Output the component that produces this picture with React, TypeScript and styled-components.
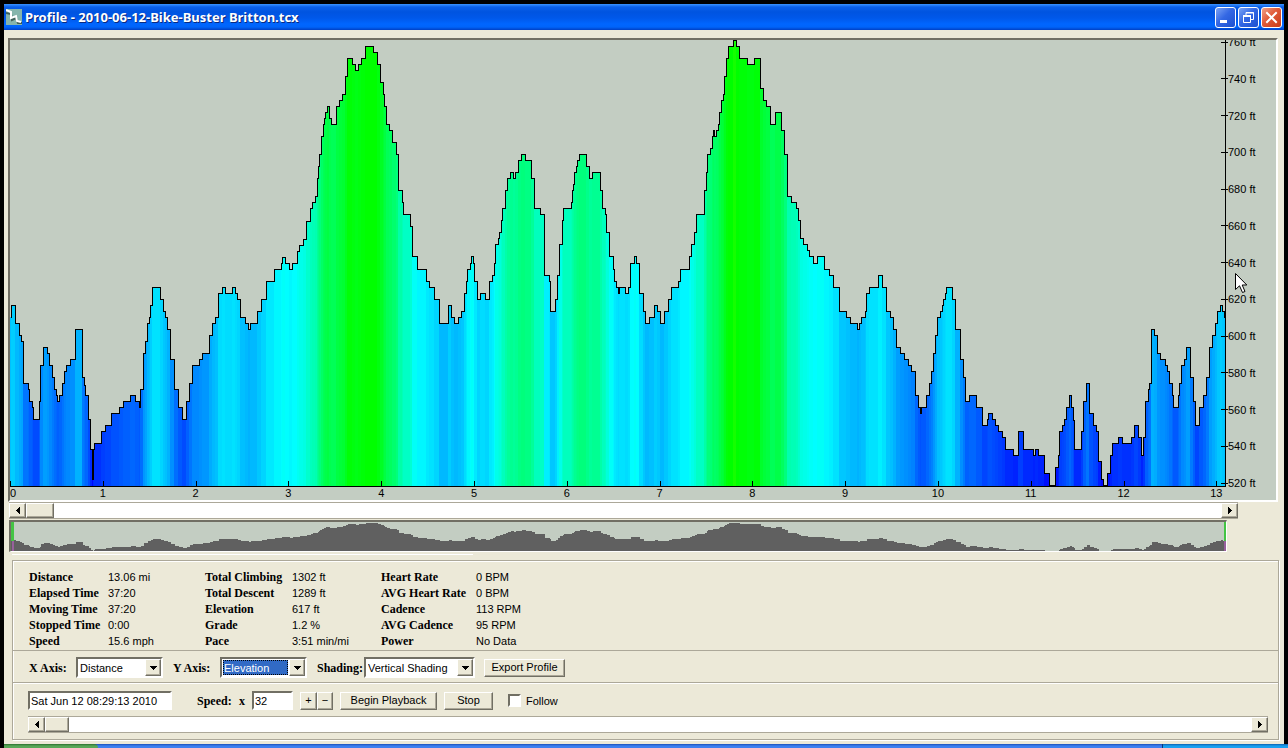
import React, { useState } from 'react';
import styled, { createGlobalStyle, css } from 'styled-components';

const face = '#ece9d8';
const shadow = '#aca899';
const dark = '#716f64';
const plotBg = '#c3cdc2';

const sans = '"Liberation Sans", Arial, sans-serif';
const serif = '"Liberation Serif", "Times New Roman", serif';

const Global = createGlobalStyle`
  * { box-sizing: border-box; }
  body { margin: 0; background: #000; font: 11px/14px ${sans}; color: #000; }
  button, input, select { font: inherit; color: inherit; margin: 0; }
`;

const raised = css`
  border: 1px solid;
  border-color: #fff ${dark} ${dark} #fff;
  box-shadow: inset -1px -1px ${shadow};
  background: ${face};
`;

const sunken = css`
  border: 2px solid;
  border-color: ${dark} #fff #fff ${dark};
  background: #fff;
`;

const Screen = styled.div`
  min-height: 100vh;
  display: flex;
  flex-direction: column;
  padding: 4px 4px 0;
  background: #000;
`;

const TitleBar = styled.header`
  display: flex;
  align-items: center;
  gap: 2px;
  height: 26px;
  padding: 0 2px;
  background: linear-gradient(#3a93ff 0, #0a5fe8 3px, #0054e0 8px, #0058ea 14px, #0066ff 20px, #0064fa 23px, #0040c4 26px);
`;

const Title = styled.h1`
  flex: 1;
  margin: 0;
  padding-left: 1px;
  font: bold 13px/18px "Noto Sans", "Open Sans", sans-serif;
  color: #fff;
  text-shadow: 1px 1px #0a2a80;
  white-space: nowrap;
`;

const CaptionButton = styled.button<{ $close?: boolean }>`
  width: 21px;
  height: 21px;
  padding: 0;
  display: flex;
  border: 1px solid #fff;
  border-radius: 3px;
  background: ${(p) =>
    p.$close
      ? 'linear-gradient(135deg, #f0a088, #e05a38 45%, #c83c18)'
      : 'linear-gradient(135deg, #7ca4f4, #3468e4 45%, #1c50d0)'};
`;

const Body = styled.main`
  flex: 1;
  display: flex;
  flex-direction: column;
  background: ${face};
`;

const Chart = styled.section`
  position: relative;
  flex: 1 0 300px;
  display: flex;
  margin: 8px 6px 0 4px;
  overflow: hidden;
  border: 2px solid;
  border-color: ${dark} #fff #fff ${dark};
  background: ${plotBg};
`;

const PlotColumn = styled.div`
  flex: 1;
  min-width: 0;
  display: flex;
  flex-direction: column;
`;

const Plot = styled.div`
  flex: 1 1 0;
  min-height: 0;
  border-right: 1px solid #000;
  border-bottom: 1px solid #000;
`;

const Stretch = styled.svg`
  display: block;
  width: 100%;
  height: 100%;
`;

const XAxis = styled.div`
  display: flex;
  height: 13px;
`;

const XCell = styled.div<{ $last: boolean }>`
  flex: ${(p) => (p.$last ? 0.104 : 1)} 0 0;
  width: 0;
`;

const XLabel = styled.span<{ $first: boolean }>`
  display: block;
  width: 24px;
  margin-left: ${(p) => (p.$first ? 0 : -12)}px;
  text-align: ${(p) => (p.$first ? 'left' : 'center')};
  line-height: 12px;
`;

const YAxis = styled.div`
  display: flex;
  flex-direction: column;
  justify-content: space-between;
  width: 55px;
  margin: -5px 0 10px -5px;
`;

const YLabel = styled.div`
  display: flex;
  align-items: center;
  line-height: 14px;
  white-space: nowrap;
  &::before {
    content: '';
    width: 7px;
    height: 1px;
    background: #000;
  }
`;

const Pointer = styled.svg`
  position: absolute;
  right: 28px;
  top: 233px;
`;

const Scroll = styled.div`
  display: flex;
  height: 17px;
  border-top: 1px solid ${shadow};
  border-bottom: 1px solid ${shadow};
  background: #fff;
`;

const ProfileScroll = styled(Scroll)`
  margin: 0 46px 0 5px;
`;

const PlaybackScroll = styled(Scroll)`
  margin-top: 6px;
`;

const ScrollButton = styled.button`
  ${raised}
  flex: none;
  width: 17px;
  padding: 0;
  display: flex;
  align-items: center;
  justify-content: center;
`;

const Range = styled.input<{ $thumb: number }>`
  appearance: none;
  flex: 1;
  min-width: 0;
  height: 15px;
  background: #fff;
  &::-webkit-slider-thumb {
    appearance: none;
    ${raised}
    width: ${(p) => p.$thumb}px;
    height: 15px;
    border-radius: 0;
  }
`;

const Overview = styled.section`
  height: 32px;
  margin: 1px 57px 0 5px;
  border: 2px solid;
  border-color: ${dark} #fff #fff ${dark};
  border-bottom-width: 1px;
  border-right-width: 1px;
  background: ${plotBg};
`;

const Highlight = styled.div`
  width: 36%;
  height: 1px;
  margin: 2px 0 5px 8px;
  background: #fff;
`;

const Panel = styled.section`
  margin: 0 5px 4px 8px;
  border: 1px solid ${shadow};
  box-shadow: 1px 1px #fff, inset 1px 1px #fff;
`;

const Stats = styled.div`
  display: flex;
  padding: 8px 16px 1px;
`;

const StatList = styled.dl<{ $label: number }>`
  display: grid;
  grid-template-columns: ${(p) => p.$label}px 1fr;
  grid-auto-rows: 16px;
  width: 176px;
  margin: 0;
  line-height: 16px;
  white-space: nowrap;
`;

const Term = styled.dt`
  font: bold 12px/16px ${serif};
`;

const Value = styled.dd`
  margin: 0;
`;

const Controls = styled.div`
  display: flex;
  align-items: center;
  height: 32px;
  padding: 2px 15px 0;
  border-top: 1px solid ${shadow};
`;

const Playback = styled.div`
  padding: 8px 10px 6px 15px;
  border-top: 1px solid ${shadow};
  box-shadow: inset 0 1px #fff;
`;

const PlaybackRow = styled.div`
  display: flex;
  align-items: center;
  height: 19px;
`;

const Label = styled.label<{ $width: number }>`
  width: ${(p) => p.$width}px;
  padding-left: 1px;
  font: bold 12px/16px ${serif};
  white-space: nowrap;
`;

const SelectBox = styled.div<{ $width: number; $active?: boolean }>`
  ${sunken}
  position: relative;
  width: ${(p) => p.$width}px;
  height: 21px;
  margin-right: 9px;
  select {
    appearance: none;
    display: block;
    width: 100%;
    height: 17px;
    padding: 2px 18px 0 2px;
    border: 0;
    border-radius: 0;
    outline: 0;
    line-height: 15px;
    color: ${(p) => (p.$active ? '#fff' : '#000')};
    background: ${(p) =>
      p.$active ? 'linear-gradient(#316ac5, #316ac5) 1px 1px / calc(100% - 18px) 15px no-repeat' : '#fff'};
  }
  &::after {
    content: '';
    position: absolute;
    inset: 1px 17px 1px 1px;
    border: ${(p) => (p.$active ? '1px dotted #000' : '0')};
    pointer-events: none;
  }
`;

const DropArrow = styled.span`
  ${raised}
  position: absolute;
  top: 0;
  right: 0;
  width: 16px;
  height: 17px;
  display: flex;
  align-items: center;
  justify-content: center;
  pointer-events: none;
`;

const PushButton = styled.button<{ $width: number; $gap?: number }>`
  ${raised}
  width: ${(p) => p.$width}px;
  height: 18px;
  margin-left: ${(p) => p.$gap ?? 0}px;
  padding: 0 0 1px;
  line-height: 14px;
  white-space: nowrap;
`;

const TextBox = styled.input<{ $width: number; $gap?: number }>`
  ${sunken}
  width: ${(p) => p.$width}px;
  height: 19px;
  margin-right: ${(p) => p.$gap ?? 0}px;
  padding: 0 1px;
  line-height: 15px;
  outline: 0;
`;

const Check = styled.input`
  ${sunken}
  appearance: none;
  width: 13px;
  height: 13px;
  margin: 0 5px 0 15px;
  &:checked { background: ${dark}; background-clip: content-box; padding: 2px; }
`;

const Taskbar = styled.footer`
  display: flex;
  height: 4px;
  margin: 0 -4px 0 0;
  background: linear-gradient(#1c50b8, #3c80f0 2px);
`;

const StartEdge = styled.div`
  width: 94px;
  border-radius: 0 4px 0 0;
  background: linear-gradient(#2c7030, #58a858 2px);
`;

const TrayEdge = styled.div`
  width: 126px;
  margin-left: auto;
  border-left: 1px solid #083878;
  background: linear-gradient(#0c60b0, #18a0f0 2px);
`;

/* Each pair is the column where a level begins and the row of that level. */
const steps: number[] = [
  10, 317, 11, 305, 15, 323, 19, 335, 21, 341, 23, 383, 28, 389, 29, 401, 32, 407, 33, 419, 39, 401, 40, 365, 43, 347,
  47, 353, 49, 365, 52, 377, 54, 389, 56, 395, 57, 401, 59, 395, 62, 383, 64, 371, 66, 365, 70, 359, 75, 329, 82, 377,
  84, 385, 85, 395, 88, 419, 90, 449, 92, 479, 93, 449, 94, 443, 101, 431, 105, 425, 111, 413, 119, 407, 123, 401,
  130, 395, 135, 401, 139, 407, 140, 389, 143, 353, 145, 341, 147, 323, 149, 317, 150, 305, 152, 287, 160, 299,
  163, 311, 165, 317, 167, 329, 170, 359, 174, 389, 178, 407, 182, 419, 186, 401, 189, 383, 192, 365, 199, 359,
  202, 353, 209, 335, 212, 323, 215, 317, 218, 293, 222, 287, 225, 293, 232, 287, 235, 293, 237, 299, 240, 317,
  245, 323, 248, 329, 250, 323, 257, 311, 261, 299, 266, 281, 274, 269, 281, 263, 282, 257, 285, 263, 289, 269,
  292, 263, 297, 251, 299, 245, 303, 239, 306, 221, 310, 208, 312, 202, 315, 196, 317, 178, 318, 166, 319, 154,
  321, 136, 323, 124, 324, 118, 325, 112, 327, 106, 329, 118, 331, 124, 336, 106, 339, 100, 342, 94, 345, 76, 347, 58,
  352, 64, 355, 70, 358, 64, 361, 58, 365, 46, 373, 52, 377, 64, 380, 82, 383, 94, 384, 106, 386, 124, 389, 130,
  392, 142, 396, 154, 398, 190, 402, 202, 403, 214, 410, 226, 412, 256, 417, 269, 426, 281, 429, 287, 434, 299,
  439, 323, 448, 305, 451, 317, 454, 323, 458, 317, 461, 311, 464, 293, 466, 281, 467, 269, 470, 263, 471, 256,
  473, 263, 474, 281, 477, 299, 480, 293, 485, 299, 489, 281, 492, 275, 494, 263, 495, 244, 498, 238, 499, 232,
  501, 220, 502, 208, 505, 190, 507, 178, 510, 172, 513, 178, 515, 172, 518, 160, 521, 154, 525, 160, 531, 178,
  534, 208, 540, 214, 544, 275, 549, 281, 550, 311, 555, 299, 557, 275, 559, 244, 562, 220, 563, 208, 571, 202,
  572, 190, 573, 184, 574, 172, 576, 166, 577, 160, 579, 154, 586, 166, 589, 178, 592, 172, 600, 190, 602, 208,
  605, 214, 606, 232, 609, 256, 613, 269, 614, 281, 616, 287, 618, 293, 619, 287, 625, 293, 628, 287, 630, 263,
  634, 256, 636, 263, 639, 293, 643, 311, 645, 323, 649, 317, 654, 305, 657, 311, 660, 323, 664, 311, 668, 299,
  671, 287, 678, 281, 680, 269, 689, 256, 691, 244, 694, 232, 696, 214, 704, 190, 706, 172, 707, 154, 710, 148,
  712, 136, 713, 130, 714, 136, 716, 130, 718, 124, 719, 112, 721, 100, 723, 94, 724, 76, 726, 58, 728, 46, 733, 40,
  736, 46, 739, 58, 747, 64, 754, 58, 760, 88, 763, 100, 766, 106, 770, 124, 775, 112, 781, 130, 784, 154, 787, 196,
  791, 202, 796, 208, 798, 220, 800, 238, 803, 244, 807, 250, 809, 256, 813, 263, 817, 256, 824, 269, 829, 275,
  833, 287, 839, 311, 846, 317, 850, 323, 857, 329, 859, 323, 861, 317, 865, 311, 866, 293, 869, 287, 878, 275,
  882, 287, 886, 311, 890, 317, 893, 329, 896, 347, 900, 353, 904, 359, 908, 365, 911, 371, 915, 395, 918, 407,
  920, 413, 921, 407, 926, 395, 929, 383, 931, 371, 933, 353, 935, 335, 937, 317, 940, 311, 942, 305, 943, 299,
  945, 293, 946, 287, 952, 299, 955, 329, 960, 359, 963, 377, 965, 401, 969, 395, 976, 407, 982, 425, 987, 419,
  988, 413, 992, 419, 995, 425, 998, 431, 1002, 437, 1005, 449, 1013, 455, 1018, 431, 1023, 449, 1033, 455, 1035, 449,
  1038, 455, 1044, 473, 1049, 485, 1055, 467, 1058, 455, 1059, 431, 1062, 425, 1064, 419, 1066, 407, 1069, 395,
  1071, 407, 1073, 420, 1074, 449, 1081, 431, 1083, 401, 1086, 383, 1089, 413, 1093, 425, 1096, 431, 1098, 461,
  1101, 479, 1103, 485, 1107, 473, 1110, 455, 1112, 443, 1118, 437, 1122, 443, 1131, 437, 1134, 425, 1138, 437,
  1141, 455, 1143, 437, 1145, 401, 1148, 389, 1149, 383, 1151, 329, 1154, 335, 1157, 353, 1160, 359, 1165, 365,
  1167, 371, 1169, 383, 1172, 395, 1173, 407, 1178, 395, 1179, 383, 1181, 365, 1184, 359, 1186, 347, 1190, 377,
  1193, 401, 1195, 425, 1199, 407, 1203, 395, 1206, 377, 1209, 347, 1212, 335, 1215, 323, 1217, 311, 1220, 305,
  1222, 311, 1224, 317,
];

const X0 = 10;
const Y0 = 40;
const X1 = 1225;
const BASE = 446;
const W = X1 - X0;

const levels = Array.from({ length: steps.length / 2 }, (_, i) => ({
  x: steps[i * 2] - X0,
  end: (steps[i * 2 + 2] ?? X1) - X0,
  y: steps[i * 2 + 1] - Y0,
}));

const shade = (y: number) => {
  if (y >= 222) return `rgb(0,${Math.max(0, Math.round(((445 - y) / 223) * 255))},255)`;
  if (y >= 6) return `rgb(0,255,${Math.max(0, Math.round(((y - 12) / 210) * 255))})`;
  return 'rgb(20,255,0)';
};

const outline = levels
  .map((l, i) => `${i === 0 ? 'M' : 'L'}${l.x + 0.5} ${l.y + 0.5}H${l.end + 0.5}`)
  .join('')
  .replace(/L([\d.]+) ([\d.]+)/g, 'V$2');

const overviewY = (y: number) => Math.round(1 + (y - 6) * 0.0667);
const overview = `M0 29${levels.map((l) => `V${overviewY(l.y)}H${l.end}`).join('')}V29Z`;

const miles = Array.from({ length: 14 }, (_, i) => i);
const feet = Array.from({ length: 13 }, (_, i) => 760 - i * 20);

const Triangle = ({ d, w = 4, h = 7 }: { d: string; w?: number; h?: number }) => (
  <svg width={w} height={h} viewBox={`0 0 ${w} ${h}`} shapeRendering="crispEdges" aria-hidden="true">
    <path d={d} />
  </svg>
);

function ScrollParts({ label, thumb }: { label: string; thumb: number }) {
  const [value, setValue] = useState(0);
  return (
    <>
      <ScrollButton aria-label={`${label} back`} onClick={() => setValue(Math.max(0, value - 1))}>
        <Triangle d="M4 0V7L0 4V3Z" />
      </ScrollButton>
      <Range
        type="range"
        aria-label={label}
        $thumb={thumb}
        value={value}
        onChange={(e) => setValue(Number(e.target.value))}
      />
      <ScrollButton aria-label={`${label} forward`} onClick={() => setValue(Math.min(100, value + 1))}>
        <Triangle d="M0 0V7L4 4V3Z" />
      </ScrollButton>
    </>
  );
}

type PickerProps = { id: string; width: number; options: string[]; initial: string; active?: boolean };

function Picker({ id, width, options, initial, active }: PickerProps) {
  return (
    <SelectBox $width={width} $active={active}>
      <select id={id} defaultValue={initial}>
        {options.map((o) => (
          <option key={o}>{o}</option>
        ))}
      </select>
      <DropArrow>
        <Triangle d="M0 0H7L4 4H3Z" w={7} h={4} />
      </DropArrow>
    </SelectBox>
  );
}

const stats: { label: number; rows: [string, string][] }[] = [
  {
    label: 79,
    rows: [
      ['Distance', '13.06 mi'],
      ['Elapsed Time', '37:20'],
      ['Moving Time', '37:20'],
      ['Stopped Time', '0:00'],
      ['Speed', '15.6 mph'],
    ],
  },
  {
    label: 87,
    rows: [
      ['Total Climbing', '1302 ft'],
      ['Total Descent', '1289 ft'],
      ['Elevation', '617 ft'],
      ['Grade', '1.2 %'],
      ['Pace', '3:51 min/mi'],
    ],
  },
  {
    label: 95,
    rows: [
      ['Heart Rate', '0 BPM'],
      ['AVG Heart Rate', '0 BPM'],
      ['Cadence', '113 RPM'],
      ['AVG Cadence', '95 RPM'],
      ['Power', 'No Data'],
    ],
  },
];

export default function App() {
  const [speed, setSpeed] = useState(32);
  return (
    <Screen>
      <Global />
      <TitleBar>
        <svg width="16" height="16" viewBox="0 0 16 16" aria-hidden="true">
          <rect width="16" height="16" fill="#86b5ac" />
          <path d="M0 4L5 5L6 11L10 9L12 14H16" fill="none" stroke="#3f5f58" strokeWidth="2" />
          <path d="M0 1L5 3L5 9L10 7L11 12L15 13" fill="none" stroke="#fff" strokeWidth="2" />
        </svg>
        <Title>Profile - 2010-06-12-Bike-Buster Britton.tcx</Title>
        <CaptionButton aria-label="Minimize">
          <svg width="19" height="19" viewBox="0 0 19 19">
            <path d="M4 12H11V15H4Z" fill="#fff" />
          </svg>
        </CaptionButton>
        <CaptionButton aria-label="Restore">
          <svg width="19" height="19" viewBox="0 0 19 19" fill="none" stroke="#fff">
            <path d="M7 7V4.5H14.5V11.5H12M7 5H15" />
            <path d="M4.5 8V14.5H11.5V8M4 8.500H12M4 7.500H12" />
          </svg>
        </CaptionButton>
        <CaptionButton aria-label="Close" $close>
          <svg width="19" height="19" viewBox="0 0 19 19">
            <path d="M5 5L14 14M14 5L5 14" stroke="#fff" strokeWidth="2" strokeLinecap="square" />
          </svg>
        </CaptionButton>
      </TitleBar>

      <Body>
        <Chart aria-label="Elevation profile">
          <PlotColumn>
            <Plot>
              <Stretch viewBox={`0 0 ${W} ${BASE}`} preserveAspectRatio="none" shapeRendering="crispEdges">
                {levels.map((l) => (
                  <rect key={l.x} x={l.x} y={l.y} width={l.end - l.x} height={BASE - l.y} fill={shade(l.y)} />
                ))}
                <path d={outline} fill="none" stroke="#000" vectorEffect="non-scaling-stroke" />
                {miles.map((m) => (
                  <rect key={m} x={Math.round(m * 92.8)} y={BASE - 5} width="1" height="5" />
                ))}
              </Stretch>
            </Plot>
            <XAxis>
              {miles.map((m) => (
                <XCell key={m} $last={m === 13}>
                  <XLabel $first={m === 0}>{m}</XLabel>
                </XCell>
              ))}
            </XAxis>
          </PlotColumn>
          <YAxis>
            {feet.map((f) => (
              <YLabel key={f}>{f} ft</YLabel>
            ))}
          </YAxis>
          <Pointer width="13" height="21" viewBox="0 0 13 21" aria-hidden="true">
            <path
              d="M0.500 0.500V16.500L4.500 12.800L7.500 19.500L10 18.500L7.200 12H11.800Z"
              fill="#fff"
              stroke="#000"
            />
          </Pointer>
        </Chart>

        <ProfileScroll>
          <ScrollParts label="Scroll profile" thumb={28} />
        </ProfileScroll>

        <Overview aria-label="Profile overview">
          <Stretch viewBox={`0 0 ${W} 29`} preserveAspectRatio="none" shapeRendering="crispEdges">
            <path d={overview} fill="#606060" />
            <rect x="0" y="0" width="3" height="19" fill="#44c444" />
            <rect x="1" y="19" width="2" height="10" fill="#98609c" />
            <rect x={W - 2} y="0" width="2" height="19" fill="#44c444" />
            <rect x={W - 2} y="19" width="2" height="10" fill="#98609c" />
          </Stretch>
        </Overview>
        <Highlight />

        <Panel>
          <Stats>
            {stats.map((group) => (
              <StatList key={group.label} $label={group.label}>
                {group.rows.map(([name, value]) => (
                  <React.Fragment key={name}>
                    <Term>{name}</Term>
                    <Value>{value}</Value>
                  </React.Fragment>
                ))}
              </StatList>
            ))}
          </Stats>

          <Controls>
            <Label htmlFor="x-axis" $width={48}>X Axis:</Label>
            <Picker id="x-axis" width={87} initial="Distance" options={['Distance', 'Time']} />
            <Label htmlFor="y-axis" $width={48}>Y Axis:</Label>
            <Picker id="y-axis" width={87} initial="Elevation" options={['Elevation', 'Speed', 'Heart Rate']} active />
            <Label htmlFor="shading" $width={48}>Shading:</Label>
            <Picker id="shading" width={111} initial="Vertical Shading" options={['Vertical Shading', 'None']} />
            <PushButton $width={81}>Export Profile</PushButton>
          </Controls>

          <Playback>
            <PlaybackRow>
              <TextBox $width={144} $gap={24} aria-label="Playback time" defaultValue="Sat Jun 12 08:29:13 2010" />
              <Label htmlFor="speed" $width={42}>Speed:</Label>
              <Label as="span" $width={14}>x</Label>
              <TextBox
                id="speed"
                $width={41}
                $gap={7}
                value={speed}
                onChange={(e) => setSpeed(Number(e.target.value) || 0)}
              />
              <PushButton $width={17} aria-label="Faster" onClick={() => setSpeed(speed * 2)}>+</PushButton>
              <PushButton $width={16} aria-label="Slower" onClick={() => setSpeed(Math.max(1, Math.floor(speed / 2)))}>
                −
              </PushButton>
              <PushButton $width={97} $gap={7}>Begin Playback</PushButton>
              <PushButton $width={49} $gap={7}>Stop</PushButton>
              <Check type="checkbox" id="follow" />
              <label htmlFor="follow">Follow</label>
            </PlaybackRow>
            <PlaybackScroll>
              <ScrollParts label="Playback position" thumb={24} />
            </PlaybackScroll>
          </Playback>
        </Panel>
      </Body>
      <Taskbar>
        <StartEdge />
        <TrayEdge />
      </Taskbar>
    </Screen>
  );
}
